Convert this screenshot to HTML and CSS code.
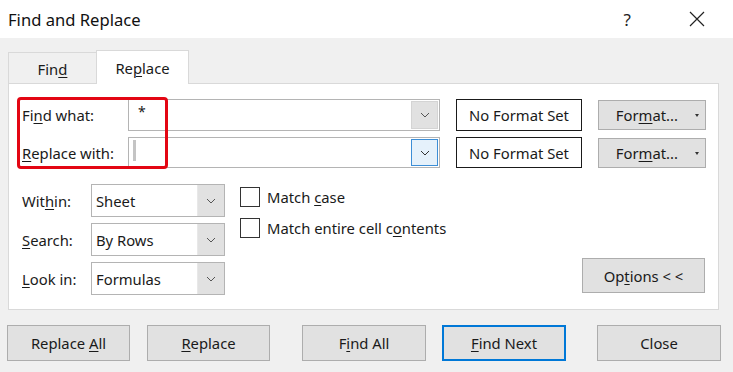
FILE: index.html
```html
<!DOCTYPE html>
<html>
<head>
<meta charset="utf-8">
<link rel="stylesheet" href="styles.css">
</head>
<body>
<div class="dialog">
  <div class="titlebar">
    <span class="title">Find and Replace</span>
    <span class="help">?</span>
    <svg class="close-x" width="16" height="16" viewBox="0 0 16 16"><path d="M1 1L15 15M15 1L1 15" stroke="#222" stroke-width="1.2" fill="none"/></svg>
  </div>
  <div class="tabs">
    <div class="tab"><span>Fin<u>d</u></span></div>
    <div class="tab active"><span>Re<u>p</u>lace</span></div>
  </div>
  <div class="panel">
    <div class="highlight"></div>
    <div class="top-grid">
      <label class="lbl">Fi<u>n</u>d what:</label>
      <div class="combo">
        <span class="combo-text">*</span>
        <span class="combo-btn"><svg width="10" height="6" viewBox="0 0 10 6"><polyline points="1,1 5,5 9,1" fill="none" stroke="#555" stroke-width="1"/></svg></span>
      </div>
      <div class="fmtset">No Format Set</div>
      <div class="fmtbtn"><span>For<u>m</u>at...</span><span class="caret"></span></div>

      <label class="lbl"><u>R</u>eplace with:</label>
      <div class="combo">
        <span class="cursor"></span>
        <span class="combo-btn hot"><svg width="10" height="6" viewBox="0 0 10 6"><polyline points="1,1 5,5 9,1" fill="none" stroke="#333" stroke-width="1"/></svg></span>
      </div>
      <div class="fmtset">No Format Set</div>
      <div class="fmtbtn"><span>For<u>m</u>at...</span><span class="caret"></span></div>
    </div>

    <div class="lower">
      <div class="selects">
        <div class="sel-row">
          <label class="lbl2">Wit<u>h</u>in:</label>
          <div class="select"><span class="sel-text">Sheet</span><span class="sel-btn"><svg width="10" height="6" viewBox="0 0 10 6"><polyline points="1,1 5,5 9,1" fill="none" stroke="#555" stroke-width="1"/></svg></span></div>
        </div>
        <div class="sel-row">
          <label class="lbl2"><u>S</u>earch:</label>
          <div class="select"><span class="sel-text">By Rows</span><span class="sel-btn"><svg width="10" height="6" viewBox="0 0 10 6"><polyline points="1,1 5,5 9,1" fill="none" stroke="#555" stroke-width="1"/></svg></span></div>
        </div>
        <div class="sel-row">
          <label class="lbl2"><u>L</u>ook in:</label>
          <div class="select"><span class="sel-text">Formulas</span><span class="sel-btn"><svg width="10" height="6" viewBox="0 0 10 6"><polyline points="1,1 5,5 9,1" fill="none" stroke="#555" stroke-width="1"/></svg></span></div>
        </div>
      </div>
      <div class="checks">
        <div class="check"><span class="box"></span><span>Match <u>c</u>ase</span></div>
        <div class="check"><span class="box"></span><span>Match entire cell c<u>o</u>ntents</span></div>
      </div>
      <div class="options-wrap">
        <div class="btn options"><span>Op<u>t</u>ions &lt; &lt;</span></div>
      </div>
    </div>
  </div>
  <div class="actions">
    <div class="btn act b1"><span>Replace <u>A</u>ll</span></div>
    <div class="btn act b2"><span><u>R</u>eplace</span></div>
    <div class="btn act b3"><span>F<u>i</u>nd All</span></div>
    <div class="btn act b4 default"><span><u>F</u>ind Next</span></div>
    <div class="btn act b5"><span>Close</span></div>
  </div>
</div>
</body>
</html>
```
FILE: styles.css
```css
* { box-sizing: border-box; }
html, body { margin: 0; padding: 0; }
body {
  width: 733px;
  height: 372px;
  overflow: hidden;
  background: #f0f0f0;
  font-family: "Noto Sans", "Open Sans", sans-serif;
  font-size: 14.8px;
  color: #1a1a1a;
}
u { text-decoration: underline; text-underline-offset: 2px; text-decoration-thickness: 1px; }

.titlebar {
  height: 38px;
  background: #fff;
  display: flex;
  align-items: center;
  padding-left: 8px;
}
.title { font-size: 16.6px; color: #111; flex: 1; }
.help { font-size: 17px; color: #222; margin-right: 58px; }
.close-x { margin-right: 28px; }

.tabs {
  display: flex;
  align-items: flex-end;
  margin: 12px 0 0 8px;
  height: 33px;
}
.tab {
  height: 31px;
  width: 88px;
  border: 1px solid #d9d9d9;
  border-bottom: none;
  border-right: none;
  display: flex;
  align-items: center;
  justify-content: center;
  padding-top: 2px;
}
.tab.active {
  height: 34px;
  width: 93px;
  background: #fff;
  border-right: 1px solid #d9d9d9;
  margin-bottom: -1px;
  position: relative;
  z-index: 1;
  padding-top: 0;
}

.panel {
  position: relative;
  margin: 0 14px 0 8px;
  height: 227px;
  background: #fff;
  border: 1px solid #d9d9d9;
  padding: 15px 0 0 13px;
}
.highlight {
  position: absolute;
  left: 8px;
  top: 13px;
  width: 151px;
  height: 72px;
  border: 3px solid #e30613;
  border-radius: 4px;
}

.top-grid {
  display: grid;
  grid-template-columns: 90px 312px 126px 108px;
  grid-template-rows: 32px 31px;
  column-gap: 16px;
  row-gap: 6px;
  align-items: center;
}
.top-grid .combo, .top-grid .fmtset { height: 100%; }
.lbl { white-space: nowrap; }
.combo {
  border: 1px solid #b4b4b4;
  display: flex;
  align-items: stretch;
  background: #fff;
}
.combo-text { flex: 1; padding: 2px 0 0 9px; font-size: 14px; }
.cursor {
  width: 3px;
  background: #c4c4c4;
  margin: 2px 0 6px 4px;
}
.combo .cursor + .combo-btn { margin-left: auto; }
.combo-btn {
  width: 27px;
  margin: 1px;
  background: #e1e1e1;
  border: 1px solid #d4d4d4;
  display: flex;
  align-items: center;
  justify-content: center;
}
.combo-btn.hot { background: #e5f1fb; border-color: #3c8ed6; }

.fmtset {
  border: 1px solid #1a1a1a;
  display: flex;
  align-items: center;
  justify-content: center;
}
.fmtbtn {
  height: 30px;
  background: #e1e1e1;
  border: 1px solid #adadad;
  display: flex;
  align-items: center;
  justify-content: flex-end;
  padding-right: 27px;
  position: relative;
}
.caret {
  position: absolute;
  right: 6px;
  top: 13px;
  width: 0; height: 0;
  border-left: 2.5px solid transparent;
  border-right: 2.5px solid transparent;
  border-top: 3px solid #333;
}

.lower {
  display: flex;
  margin-top: 16px;
}
.selects { display: flex; flex-direction: column; gap: 6px; }
.sel-row { display: flex; align-items: center; }
.lbl2 { width: 69px; }
.select {
  width: 134px;
  height: 33px;
  border: 1px solid #b4b4b4;
  display: flex;
}
.sel-text { flex: 1; padding-left: 4px; display: flex; align-items: center; }
.sel-btn {
  width: 27px;
  background: #e1e1e1;
  border-left: 1px solid #e8e8e8;
  display: flex;
  align-items: center;
  justify-content: center;
}

.checks {
  display: flex;
  flex-direction: column;
  gap: 10px;
  margin-left: 15px;
  padding-top: 2px;
}
.check { display: flex; align-items: center; height: 21px; }
.box {
  width: 20px; height: 20px;
  border: 1px solid #333;
  margin-right: 7px;
  background: #fff;
}

.options-wrap {
  flex: 1;
  display: flex;
  align-items: flex-end;
  justify-content: flex-end;
  padding-right: 13px;
}
.btn {
  background: #e1e1e1;
  border: 1px solid #adadad;
  display: flex;
  align-items: center;
  justify-content: center;
}
.options { width: 123px; height: 35px; margin-bottom: 2px; }

.actions {
  display: flex;
  margin-top: 15px;
  padding-left: 7px;
}
.act { height: 36px; width: 123px; }
.b2 { margin-left: 17px; }
.b3 { margin-left: 32px; width: 124px; }
.b4 { margin-left: 16px; width: 124px; }
.b5 { margin-left: 31px; width: 124px; }
.default { border: 2px solid #0078d7; }
```
